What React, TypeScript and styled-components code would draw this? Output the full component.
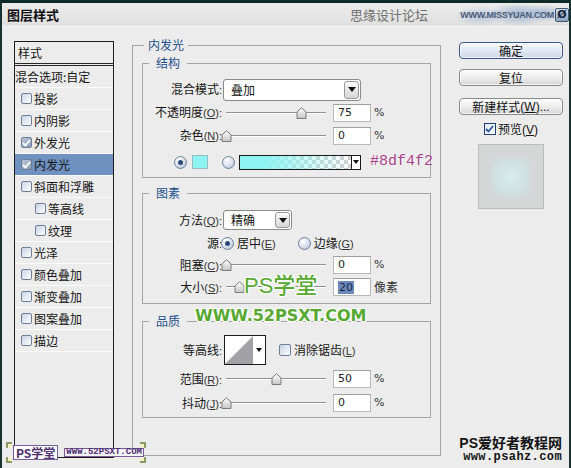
import React from "react";
import styled, { createGlobalStyle } from "styled-components";

const GlobalStyle = createGlobalStyle`
  * { box-sizing: border-box; }
  html, body { margin: 0; padding: 0; background: #ececec; }
  body {
    font-family: "Liberation Sans", "Noto Sans CJK SC", sans-serif;
    font-size: 12px;
    line-height: 14px;
    color: #151515;
  }
`;

/* ---------- window frame ---------- */

const Window = styled.div`
  position: relative;
  width: 571px;
  height: 468px;
  overflow: hidden;
  background: #ececec;
  border-top: 3px solid #0e2a28;
  border-left: 2px solid #17332f;
  border-right: 2px solid #17332f;
  display: flex;
  flex-direction: column;
`;

const TitleBar = styled.div`
  height: 24px;
  flex-shrink: 0;
  display: flex;
  align-items: center;
  justify-content: space-between;
  padding-left: 5px;
  background: linear-gradient(#ebebeb, #e0e0e0);
  border-bottom: 1px solid #f6f6f6;
`;

const Title = styled.span`
  font-family: "Noto Sans CJK SC", sans-serif;
  font-weight: 700;
  font-size: 13px;
  color: #111;
`;

const TitleRight = styled.div`
  display: flex;
  align-items: center;
  height: 100%;
`;

const SiteName = styled.span`
  font-family: "Noto Sans CJK SC", sans-serif;
  font-size: 13px;
  color: #707070;
  margin-right: 7px;
`;

const SiteLogo = styled.span`
  width: 120px;
  height: 20px;
  display: flex;
  align-items: center;
  justify-content: flex-end;
  padding-right: 1px;
  font-family: "Liberation Sans", sans-serif;
  font-weight: 700;
  font-size: 9px;
  letter-spacing: -0.3px;
  color: #4a5c7a;
  background:
    radial-gradient(ellipse 30px 12px at 70% 45%, rgba(96, 136, 190, 0.5), transparent),
    radial-gradient(ellipse 26px 10px at 38% 55%, rgba(120, 155, 205, 0.4), transparent),
    radial-gradient(ellipse 20px 9px at 92% 40%, rgba(90, 130, 185, 0.4), transparent);
`;

const CloseIcon = styled.span`
  width: 14px;
  height: 14px;
  display: flex;
  align-items: center;
  justify-content: center;
  border: 1px solid #3f5674;
  border-radius: 2px;
  background: linear-gradient(#d5dfeb, #8ea4bf);
  font-family: "DejaVu Sans", sans-serif;
  font-weight: 700;
  font-size: 11px;
  line-height: 11px;
  color: #142238;
`;

const Body = styled.div`
  flex: 1;
  display: flex;
  align-items: flex-start;
  padding: 11px 6px 0 12px;
`;

/* ---------- left styles list ---------- */

const StylesPanel = styled.div`
  width: 100px;
  height: 417px;
  margin-top: 3px;
  flex-shrink: 0;
  border: 1px solid #1b1b1b;
  background: #ececec;
  display: flex;
  flex-direction: column;
`;

const PanelHeader = styled.div`
  height: 24px;
  display: flex;
  align-items: center;
  padding-left: 3px;
  border-bottom: 3px double #262626;
  font-family: "Noto Sans CJK SC", sans-serif;
`;

const PanelRow = styled.div<{ $selected?: boolean; $indent?: boolean; $plain?: boolean }>`
  height: 22px;
  flex-shrink: 0;
  display: flex;
  align-items: center;
  gap: 2px;
  padding-left: ${(p) => (p.$plain ? 0 : p.$indent ? 20 : 6)}px;
  border-bottom: 1px solid #fbfbfb;
  background: ${(p) => (p.$selected ? "#6f92c0" : "transparent")};
  font-family: "Noto Sans CJK SC", sans-serif;
  white-space: nowrap;
`;

const BoxCheck = styled.span<{ $checked?: boolean; $size?: number }>`
  width: ${(p) => p.$size ?? 11}px;
  height: ${(p) => p.$size ?? 11}px;
  flex-shrink: 0;
  display: flex;
  align-items: center;
  justify-content: center;
  border: 1px solid #6c7f99;
  border-radius: 2px;
  background: ${(p) =>
    p.$checked
      ? "linear-gradient(135deg, #b9c6d8, #8b9db6)"
      : "linear-gradient(135deg, #c9d3e1 0%, #eef2f8 70%, #ffffff 100%)"};
`;

const PreviewCheck = styled.span`
  width: 12px;
  height: 12px;
  flex-shrink: 0;
  display: flex;
  align-items: center;
  justify-content: center;
  border: 1px solid #1f3f78;
  background: linear-gradient(135deg, #e4e9f2, #ffffff);
`;

const CheckMark = ({ color }: { color: string }) => (
  <svg width="9" height="8" viewBox="0 0 9 8">
    <polyline points="1,4 3.5,6.5 8,1" fill="none" stroke={color} strokeWidth="1.8" />
  </svg>
);

/* ---------- group boxes ---------- */

const Group = styled.fieldset<{ $mt?: number; $w?: number; $h?: number; $ml?: number }>`
  margin: ${(p) => p.$mt ?? 0}px 0 0 ${(p) => p.$ml ?? 0}px;
  padding: 0;
  min-width: 0;
  ${(p) => (p.$w ? `width: ${p.$w}px; flex-shrink: 0;` : "")}
  ${(p) => (p.$h ? `height: ${p.$h}px;` : "")}
  border: 1px solid #a4a4a4;
  display: flex;
  flex-direction: column;
`;

const Legend = styled.legend<{ $ml: number; $px: number }>`
  margin-left: ${(p) => p.$ml}px;
  padding: 0 ${(p) => p.$px}px;
  line-height: 14px;
  font-family: "Noto Sans CJK SC", sans-serif;
  font-size: 12px;
  color: #1d4f8e;
`;

const GroupContent = styled.div<{ $pt: number; $pb: number; $px?: number }>`
  display: flex;
  flex-direction: column;
  padding: ${(p) => p.$pt}px ${(p) => p.$px ?? 0}px ${(p) => p.$pb}px;
`;

const Row = styled.div<{ $h: number; $mt?: number; $pl?: number }>`
  height: ${(p) => p.$h}px;
  margin-top: ${(p) => p.$mt ?? 0}px;
  padding-left: ${(p) => p.$pl ?? 0}px;
  display: flex;
  align-items: center;
  white-space: nowrap;
`;

const Label = styled.span`
  width: 79px;
  flex-shrink: 0;
  text-align: right;
`;

const Cjk = styled.span`
  font-family: "Noto Sans CJK SC", sans-serif;
`;

const Key = styled.span`
  font-family: "Liberation Sans", sans-serif;
  font-size: 11px;
  color: #333;
`;

const U = styled.span`
  text-decoration: underline;
`;

/* ---------- controls ---------- */

const Select = styled.div<{ $w: number; $h: number }>`
  margin-left: 1px;
  width: ${(p) => p.$w}px;
  height: ${(p) => p.$h}px;
  display: flex;
  background: #fff;
  border: 1px solid #8a8a8a;
  border-radius: 3px;
`;

const SelectText = styled.span`
  flex: 1;
  display: flex;
  align-items: center;
  padding-left: 7px;
  font-family: "Noto Sans CJK SC", sans-serif;
`;

const SelectButton = styled.span`
  width: 15px;
  display: flex;
  align-items: center;
  justify-content: center;
  border: 1px solid #9a9a9a;
  border-radius: 3px;
  margin: 1px;
  background: linear-gradient(#fbfbfb, #d6d6d6);
`;

const DownTri = ({ w = 8, h = 5 }: { w?: number; h?: number }) => (
  <svg width={w} height={h} viewBox={`0 0 ${w} ${h}`}>
    <polygon points={`0,0 ${w},0 ${w / 2},${h}`} fill="#111" />
  </svg>
);

const SliderTrack = styled.div`
  position: relative;
  width: 100px;
  height: 14px;
  margin-left: 4px;
  flex-shrink: 0;
  &::before {
    content: "";
    position: absolute;
    left: 0;
    right: 0;
    top: 6px;
    height: 1px;
    background: #8f8f8f;
    box-shadow: 0 1px 0 #ffffff;
  }
`;

const SliderThumb = styled.span`
  position: absolute;
  top: 1px;
  width: 11px;
  height: 12px;
  margin-left: -5px;
  display: block;
`;

const NumberBox = styled.span`
  margin-left: 7px;
  width: 38px;
  height: 18px;
  flex-shrink: 0;
  display: flex;
  align-items: center;
  padding-left: 4px;
  background: #fff;
  border: 1px solid #b8b8b8;
  border-top-color: #9e9e9e;
  font-family: "DejaVu Sans", sans-serif;
  font-size: 11px;
  color: #222;
`;

const Selected = styled.span`
  background: #6d89ba;
  color: #15254a;
  padding: 0 1px;
  line-height: 13px;
`;

const Unit = styled.span<{ $cjk?: boolean }>`
  margin-left: 3px;
  font-family: ${(p) => (p.$cjk ? '"Noto Sans CJK SC", sans-serif' : '"DejaVu Sans", sans-serif')};
  font-size: ${(p) => (p.$cjk ? 12 : 11)}px;
  color: #333;
`;

const Radio = styled.span<{ $on?: boolean; $ml?: number }>`
  position: relative;
  width: 13px;
  height: 13px;
  flex-shrink: 0;
  margin-left: ${(p) => p.$ml ?? 0}px;
  border-radius: 50%;
  border: 1px solid #6f819b;
  background: radial-gradient(circle at 35% 30%, #ffffff 0%, #dfe6f0 45%, #a9b9cf 100%);
  &::after {
    content: "";
    display: ${(p) => (p.$on ? "block" : "none")};
    position: absolute;
    left: 3px;
    top: 3px;
    width: 5px;
    height: 5px;
    border-radius: 50%;
    background: #2b4a7a;
  }
`;

const RadioText = styled.span<{ $ml?: number }>`
  margin-left: ${(p) => p.$ml ?? 3}px;
  font-family: "Noto Sans CJK SC", sans-serif;
`;

const Swatch = styled.span<{ $color: string }>`
  margin-left: 5px;
  width: 16px;
  height: 14px;
  flex-shrink: 0;
  background: ${(p) => p.$color};
  border: 1px solid #9cb8c0;
`;

const GradientBox = styled.div`
  margin-left: 4px;
  width: 122px;
  height: 15px;
  flex-shrink: 0;
  display: flex;
  border: 1px solid #1a1a1a;
  background: #fff;
`;

const GradientFill = styled.span`
  flex: 1;
  background:
    linear-gradient(to right, #8df4f2 0%, #8df4f2 22%, rgba(141, 244, 242, 0.35) 70%, rgba(141, 244, 242, 0) 100%),
    repeating-conic-gradient(#d0d0d0 0 25%, #ffffff 0 50%) 0 0 / 8px 8px;
`;

const GradientArrow = styled.span`
  width: 9px;
  display: flex;
  align-items: center;
  justify-content: center;
  border-left: 1px solid #1a1a1a;
  background: #fff;
`;

const HexNote = styled.span`
  margin-left: 9px;
  font-family: "Liberation Mono", monospace;
  font-size: 15px;
  color: #a83f8a;
  text-shadow: 0 0 2px rgba(255, 255, 255, 0.9);
`;

const ContourBox = styled.div`
  margin-left: 2px;
  width: 42px;
  height: 30px;
  flex-shrink: 0;
  display: flex;
  border: 1px solid #1a1a1a;
  background: #fff;
`;

const ContourArrow = styled.span`
  flex: 1;
  display: flex;
  align-items: center;
  justify-content: center;
`;

const CheckText = styled.span`
  margin-left: 3px;
  font-family: "Noto Sans CJK SC", sans-serif;
`;

/* ---------- right column ---------- */

const Side = styled.div`
  width: 104px;
  flex-shrink: 0;
  margin-left: 18px;
  margin-top: 4px;
  display: flex;
  flex-direction: column;
  align-items: stretch;
`;

const Button = styled.div<{ $primary?: boolean; $mt?: number }>`
  height: 17px;
  margin-top: ${(p) => p.$mt ?? 0}px;
  display: flex;
  align-items: center;
  justify-content: center;
  border: 1px solid ${(p) => (p.$primary ? "#37588c" : "#8a8a8a")};
  border-radius: 4px;
  background: ${(p) =>
    p.$primary
      ? "linear-gradient(#f7f9fd, #dde5f0 60%, #cdd7e6)"
      : "linear-gradient(#fdfdfd, #ebebeb 55%, #d6d6d6)"};
  box-shadow: inset 0 0 0 1px rgba(255, 255, 255, 0.7);
  font-family: "Noto Sans CJK SC", sans-serif;
  color: #111;
  white-space: nowrap;
`;

const PreviewRow = styled.div`
  height: 14px;
  margin-top: 7px;
  display: flex;
  align-items: center;
  justify-content: center;
  gap: 2px;
  font-family: "Noto Sans CJK SC", sans-serif;
`;

const PreviewBox = styled.div`
  margin: 8px auto 0;
  width: 66px;
  height: 65px;
  display: flex;
  align-items: center;
  justify-content: center;
  background: #d5d7d7;
  border: 1px solid #bbbbbb;
`;

const GlowSquare = styled.div`
  width: 38px;
  height: 38px;
  background: radial-gradient(circle, #d7efed 0%, #cfe3e2 50%, #cdd9d9 100%);
  filter: blur(2px);
`;

/* ---------- overlaid watermarks ---------- */

const outline =
  "1px 0 #fff, -1px 0 #fff, 0 1px #fff, 0 -1px #fff, 1px 1px #fff, -1px -1px #fff, 1px -1px #fff, -1px 1px #fff, 0 0 3px #fff";

const GreenMark = styled.span<{ $x: number; $y: number; $size: number; $heavy?: boolean }>`
  position: absolute;
  left: ${(p) => p.$x}px;
  top: ${(p) => p.$y}px;
  font-family: ${(p) => (p.$heavy ? '"DejaVu Sans", sans-serif' : '"Liberation Sans", "Noto Sans CJK SC", sans-serif')};
  font-weight: ${(p) => (p.$heavy ? 900 : 500)};
  font-size: ${(p) => p.$size}px;
  line-height: ${(p) => p.$size + 2}px;
  color: #58a932;
  text-shadow: ${outline};
  white-space: nowrap;
`;

const Stamp = styled.div`
  position: absolute;
  left: 4px;
  top: 439px;
  width: 141px;
  height: 21px;
  display: flex;
  align-items: center;
  padding-left: 7px;
`;

const StampBox = styled.span`
  height: 15px;
  display: flex;
  align-items: center;
  padding: 0 2px;
  background: #fff;
  border: 1px solid #7a5a98;
  font-family: "Noto Sans CJK SC", sans-serif;
  font-weight: 700;
  font-size: 12px;
  color: #4c2f6e;
`;

const StampUrl = styled.span`
  margin-left: 6px;
  height: 9px;
  display: flex;
  align-items: center;
  padding: 0 1px;
  background: #f6f2fa;
  border: 1px solid #7a5a98;
  font-family: "Liberation Mono", monospace;
  font-weight: 700;
  font-size: 9px;
  line-height: 9px;
  color: #4c2f6e;
`;

const Corner = styled.span<{ $x: number; $y: number; $r: number }>`
  position: absolute;
  left: ${(p) => p.$x}px;
  top: ${(p) => p.$y}px;
  width: 6px;
  height: 6px;
  border-left: 2px solid #8a9a62;
  border-top: 2px solid #8a9a62;
  background: #f3f0c8;
  transform: rotate(${(p) => p.$r}deg);
`;

const SiteFooter = styled.div`
  position: absolute;
  right: 7px;
  top: 432px;
  display: flex;
  flex-direction: column;
  align-items: flex-end;
  color: #141414;
  font-weight: 700;
`;

const FooterName = styled.span`
  font-family: "Liberation Sans", "Noto Sans CJK SC", sans-serif;
  font-size: 14px;
  line-height: 16px;
`;

const FooterUrl = styled.span`
  font-family: "Liberation Mono", monospace;
  font-size: 12px;
  line-height: 13px;
  letter-spacing: 0.4px;
`;

/* ---------- pieces ---------- */

const Thumb = () => (
  <svg width="11" height="12" viewBox="0 0 11 12">
    <defs>
      <linearGradient id="thumbGrad" x1="0" y1="0" x2="0" y2="1">
        <stop offset="0" stopColor="#ffffff" />
        <stop offset="1" stopColor="#c6c6c6" />
      </linearGradient>
    </defs>
    <path d="M1 11.5V4.8L5.5 0.8L10 4.8V11.5Z" fill="url(#thumbGrad)" stroke="#7a7a7a" strokeLinejoin="round" />
  </svg>
);

const Slider = ({ pos }: { pos: number }) => (
  <SliderTrack>
    <SliderThumb style={{ left: `${pos}%` }}>
      <Thumb />
    </SliderThumb>
  </SliderTrack>
);

const FieldLabel = ({ text, k }: { text: string; k?: string }) => (
  <Label>
    <Cjk>{text}</Cjk>
    {k ? (
      <Key>
        (<U>{k}</U>):
      </Key>
    ) : (
      <Key>:</Key>
    )}
  </Label>
);

const SliderRow = ({
  label,
  k,
  pos,
  value,
  unit,
  h,
  mt,
  selected,
}: {
  label: string;
  k: string;
  pos: number;
  value: string;
  unit: string;
  h: number;
  mt?: number;
  selected?: boolean;
}) => (
  <Row $h={h} $mt={mt}>
    <FieldLabel text={label} k={k} />
    <Slider pos={pos} />
    <NumberBox>{selected ? <Selected>{value}</Selected> : value}</NumberBox>
    <Unit $cjk={unit !== "%"}>{unit}</Unit>
  </Row>
);

const styleItems: { label: string; checked?: boolean; selected?: boolean; indent?: boolean }[] = [
  { label: "投影" },
  { label: "内阴影" },
  { label: "外发光", checked: true },
  { label: "内发光", checked: true, selected: true },
  { label: "斜面和浮雕" },
  { label: "等高线", indent: true },
  { label: "纹理", indent: true },
  { label: "光泽" },
  { label: "颜色叠加" },
  { label: "渐变叠加" },
  { label: "图案叠加" },
  { label: "描边" },
];

export default function App() {
  return (
    <>
      <GlobalStyle />
      <Window>
        <TitleBar>
          <Title>图层样式</Title>
          <TitleRight>
            <SiteName>思缘设计论坛</SiteName>
            <SiteLogo>WWW.MISSYUAN.COM</SiteLogo>
            <CloseIcon>Ø</CloseIcon>
          </TitleRight>
        </TitleBar>

        <Body>
          <StylesPanel>
            <PanelHeader>样式</PanelHeader>
            <PanelRow $plain>混合选项:自定</PanelRow>
            {styleItems.map((it) => (
              <PanelRow key={it.label} $selected={it.selected} $indent={it.indent}>
                <BoxCheck $checked={it.checked}>{it.checked && <CheckMark color="#ffffff" />}</BoxCheck>
                {it.label}
              </PanelRow>
            ))}
          </StylesPanel>

          <Group $w={309} $h={418} $ml={18}>
            <Legend $ml={11} $px={4}>内发光</Legend>
            <GroupContent $pt={4} $pb={0} $px={9}>
              <Group>
                <Legend $ml={6} $px={7}>结构</Legend>
                <GroupContent $pt={8} $pb={7}>
                  <Row $h={23}>
                    <FieldLabel text="混合模式" />
                    <Select $w={138} $h={22}>
                      <SelectText>叠加</SelectText>
                      <SelectButton>
                        <DownTri />
                      </SelectButton>
                    </Select>
                  </Row>
                  <SliderRow label="不透明度" k="O" pos={75} value="75" unit="%" h={23} />
                  <SliderRow label="杂色" k="N" pos={0} value="0" unit="%" h={23} />
                  <Row $h={16} $mt={7}>
                    <Radio $on $ml={31} />
                    <Swatch $color="#8df4f2" />
                    <Radio $ml={14} />
                    <GradientBox>
                      <GradientFill />
                      <GradientArrow>
                        <DownTri w={6} h={4} />
                      </GradientArrow>
                    </GradientBox>
                    <HexNote>#8df4f2</HexNote>
                  </Row>
                </GroupContent>
              </Group>

              <Group $mt={8}>
                <Legend $ml={6} $px={7}>图素</Legend>
                <GroupContent $pt={10} $pb={5}>
                  <Row $h={20}>
                    <FieldLabel text="方法" k="Q" />
                    <Select $w={69} $h={20}>
                      <SelectText>精确</SelectText>
                      <SelectButton>
                        <DownTri />
                      </SelectButton>
                    </Select>
                  </Row>
                  <Row $h={22} $mt={2}>
                    <Label>
                      <Cjk>源</Cjk>
                      <Key>:</Key>
                    </Label>
                    <Radio $on $ml={-1} />
                    <RadioText>
                      居中<Key>(<U>E</U>)</Key>
                    </RadioText>
                    <Radio $ml={22} />
                    <RadioText>
                      边缘<Key>(<U>G</U>)</Key>
                    </RadioText>
                  </Row>
                  <SliderRow label="阻塞" k="C" pos={0} value="0" unit="%" h={22} />
                  <SliderRow label="大小" k="S" pos={13} value="20" unit="像素" h={22} selected />
                </GroupContent>
              </Group>

              <Group $mt={10}>
                <Legend $ml={6} $px={7}>品质</Legend>
                <GroupContent $pt={7} $pb={2}>
                  <Row $h={30}>
                    <FieldLabel text="等高线" />
                    <ContourBox>
                      <svg width="28" height="28" viewBox="0 0 28 28">
                        <polygon points="0,28 28,0 28,28" fill="#a2a2a6" />
                      </svg>
                      <ContourArrow>
                        <DownTri w={6} h={4} />
                      </ContourArrow>
                    </ContourBox>
                    <BoxCheck $size={12} style={{ marginLeft: 13 }} />
                    <CheckText>
                      消除锯齿<Key>(<U>L</U>)</Key>
                    </CheckText>
                  </Row>
                  <SliderRow label="范围" k="R" pos={50} value="50" unit="%" h={24} mt={2} />
                  <SliderRow label="抖动" k="J" pos={0} value="0" unit="%" h={24} />
                </GroupContent>
              </Group>
            </GroupContent>
          </Group>

          <Side>
            <Button $primary>确定</Button>
            <Button $mt={10}>复位</Button>
            <Button $mt={12}>
              新建样式<Key style={{ fontSize: 12, color: "#111" }}>(<U>W</U>)...</Key>
            </Button>
            <PreviewRow>
              <PreviewCheck>
                <CheckMark color="#2556a6" />
              </PreviewCheck>
              <span>
                预览<Key style={{ fontSize: 12, color: "#111" }}>(<U>V</U>)</Key>
              </span>
            </PreviewRow>
            <PreviewBox>
              <GlowSquare />
            </PreviewBox>
          </Side>
        </Body>

        <GreenMark $x={242} $y={271} $size={22}>PS学堂</GreenMark>
        <GreenMark $x={193} $y={304} $size={16} $heavy>WWW.52PSXT.COM</GreenMark>

        <Stamp>
          <StampBox>PS学堂</StampBox>
          <StampUrl>WWW.52PSXT.COM</StampUrl>
          <Corner $x={0} $y={0} $r={0} />
          <Corner $x={0} $y={15} $r={-90} />
          <Corner $x={134} $y={0} $r={90} />
          <Corner $x={134} $y={15} $r={180} />
        </Stamp>

        <SiteFooter>
          <FooterName>PS爱好者教程网</FooterName>
          <FooterUrl>www.psahz.com</FooterUrl>
        </SiteFooter>
      </Window>
    </>
  );
}
